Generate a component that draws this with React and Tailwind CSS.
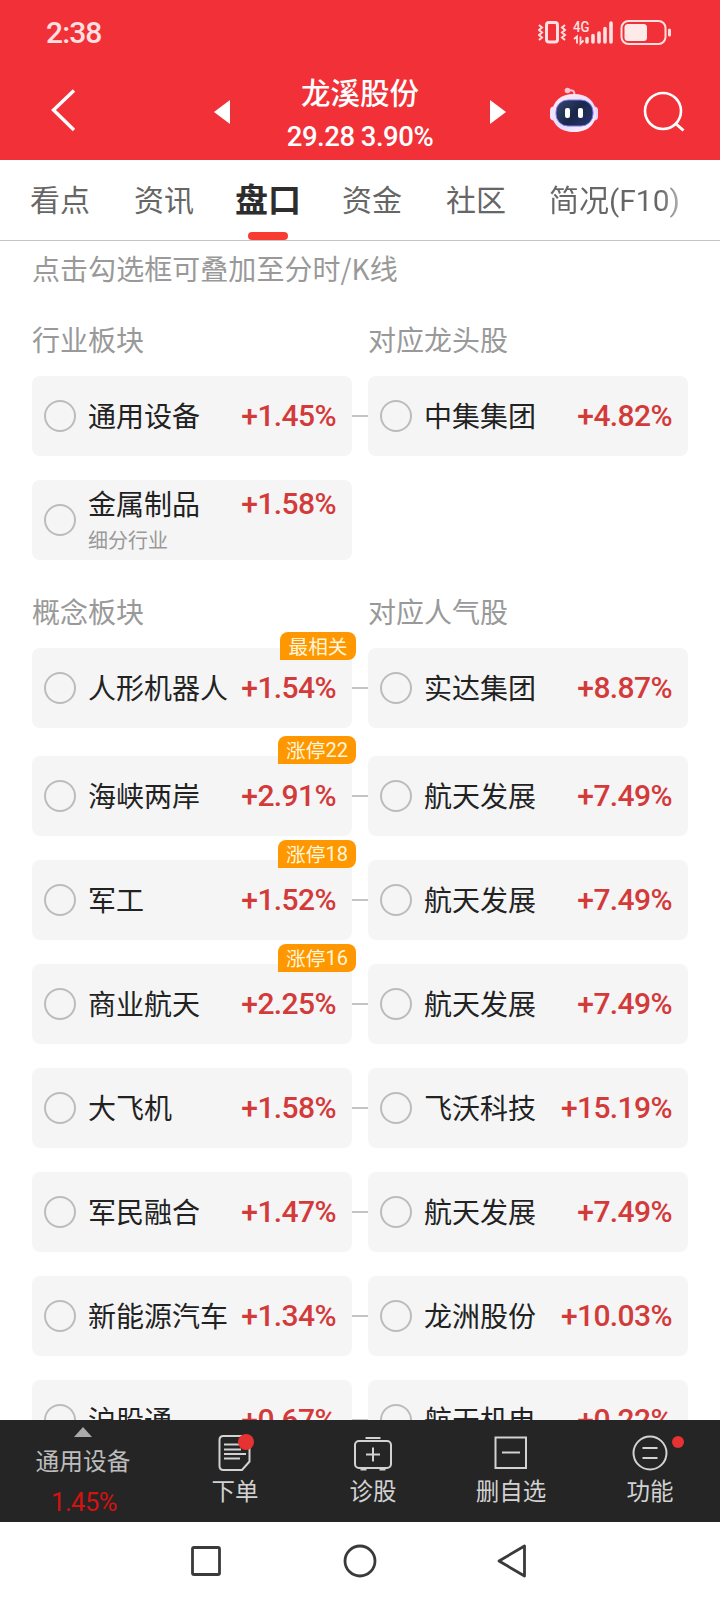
const CJK = "font-['Noto_Sans_CJK_SC',sans-serif]";
const NUM = "font-['Roboto','Noto_Sans_CJK_SC',sans-serif]";

const industries = [
  { left: ['通用设备', '+1.45%'], right: ['中集集团', '+4.82%'], gap: '' },
  { left: ['金属制品', '+1.58%'], sub: '细分行业', gap: 'mt-6' },
];

const concepts = [
  { left: ['人形机器人', '+1.54%'], right: ['实达集团', '+8.87%'], badge: '最相关', badgePos: '-top-4 w-[76px]', gap: '' },
  { left: ['海峡两岸', '+2.91%'], right: ['航天发展', '+7.49%'], badge: '涨停', count: 22, badgePos: '-top-5 w-[78px]', gap: 'mt-7' },
  { left: ['军工', '+1.52%'], right: ['航天发展', '+7.49%'], badge: '涨停', count: 18, badgePos: '-top-5 w-[78px]', gap: 'mt-6' },
  { left: ['商业航天', '+2.25%'], right: ['航天发展', '+7.49%'], badge: '涨停', count: 16, badgePos: '-top-5 w-[78px]', gap: 'mt-6' },
  { left: ['大飞机', '+1.58%'], right: ['飞沃科技', '+15.19%'], gap: 'mt-6' },
  { left: ['军民融合', '+1.47%'], right: ['航天发展', '+7.49%'], gap: 'mt-6' },
  { left: ['新能源汽车', '+1.34%'], right: ['龙洲股份', '+10.03%'], gap: 'mt-6' },
  { left: ['沪股通', '+0.67%'], right: ['航天机电', '+0.22%'], gap: 'mt-6' },
];

function StatusBar() {
  return (
    <div className="flex h-16 items-center pt-0.5 pl-[46px] pr-[48px] text-[#ffe0e0]">
      <span className={`${NUM} text-[30px] leading-8 font-medium tracking-[-0.9px]`}>2:38</span>
      <svg className="ml-auto" width="134" height="26" viewBox="0 0 134 26" fill="none" stroke="currentColor">
        <rect x="8.500" y="2.500" width="11" height="19.500" rx="2.500" strokeWidth="3" />
        <path d="M1 5l3 2.500-3 2.500 3 2.500-3 2.500 3 2.500-3 2.500M27 5l-3 2.500 3 2.500-3 2.500 3 2.500-3 2.500 3 2.500" strokeWidth="2" />
        <text x="35" y="12" fontSize="14.500" fontWeight="500" fontFamily="Roboto" textLength="16.500" lengthAdjust="spacingAndGlyphs" fill="currentColor" stroke="none">4G</text>
        <path d="M36 19l3-2.500v7M42.500 16.500v7l3-3" strokeWidth="1.800" />
        <path d="M49 18.500v3.500M55 15.500v6.500M61 13v9M67 8.500v13.500M73 3v19" strokeWidth="3.600" strokeLinecap="round" />
        <rect x="83.500" y="1" width="44" height="23" rx="7" strokeWidth="2" />
        <rect x="86.500" y="4" width="22.500" height="17" rx="3.500" fill="#ffeaea" stroke="none" />
        <path d="M131.500 10v5" strokeWidth="3" strokeLinecap="round" />
      </svg>
    </div>
  );
}

function Robot() {
  return (
    <svg width="48" height="46" viewBox="0 0 48 46" fill="none">
      <defs>
        <linearGradient id="shell" x1="10" y1="6" x2="36" y2="46" gradientUnits="userSpaceOnUse">
          <stop stopColor="#ffe9f4" />
          <stop offset="0.6" stopColor="#e3dcff" />
          <stop offset="1" stopColor="#fff0fa" />
        </linearGradient>
        <linearGradient id="visor" x1="8" y1="14" x2="40" y2="40" gradientUnits="userSpaceOnUse">
          <stop stopColor="#34466c" />
          <stop offset="0.5" stopColor="#1a2749" />
          <stop offset="1" stopColor="#26356b" />
        </linearGradient>
      </defs>
      <path d="M18 3.500c4-1 6.500 0 6.500 4" stroke="#ffc4d2" strokeWidth="2" />
      <circle cx="17.500" cy="3.500" r="2.800" fill="#ffc4d2" />
      <rect x="0" y="19.500" width="10" height="14" rx="4" fill="#f1e4ff" />
      <rect x="38" y="19.500" width="10" height="14" rx="4" fill="#e3d3ff" />
      <path d="M24 7C37 7 45.500 14 46 26 46 38 37 45 24 45S2 38 2 26C2.500 14 11 7 24 7Z" fill="url(#shell)" />
      <rect x="6" y="13" width="37" height="26" rx="12" fill="url(#visor)" stroke="#7f75ea" strokeWidth="1" />
      <rect x="15" y="21" width="5" height="10" rx="2" fill="#fff" />
      <rect x="28" y="21" width="5" height="10" rx="2" fill="#fff" />
    </svg>
  );
}

function Header() {
  return (
    <header className="h-40 bg-[#f23038]">
      <StatusBar />
      <div className="flex h-24 text-white">
        <svg className="mt-6 ml-[50px]" width="26" height="44" viewBox="0 0 26 44" fill="none" stroke="currentColor" strokeWidth="3.400">
          <path d="M24 2.500L3.500 22L24 42" />
        </svg>
        <svg className="mt-9 ml-[138px]" width="16" height="24" viewBox="0 0 16 24" fill="currentColor">
          <path d="M16 0v24L0 12z" />
        </svg>
        <div className="flex w-[260px] flex-col items-center pt-[7px]">
          <h1 className={`${CJK} text-[29.500px] leading-10 font-medium`}>龙溪股份</h1>
          <p className={`${NUM} mt-2 text-[27.500px] leading-9 font-medium tracking-[-0.5px] whitespace-nowrap`}>29.28 3.90%</p>
        </div>
        <svg className="mt-9" width="16" height="24" viewBox="0 0 16 24" fill="currentColor">
          <path d="M0 0v24l16-12z" />
        </svg>
        <div className="mt-[23px] ml-11">
          <Robot />
        </div>
        <svg className="mt-[26px] ml-[45px]" width="42" height="42" viewBox="0 0 42 42" fill="none" stroke="currentColor" strokeWidth="2.600">
          <circle cx="20" cy="21" r="18" />
          <path d="M32 33l8.500 7.500" strokeWidth="3" />
        </svg>
      </div>
    </header>
  );
}

function Tabs() {
  return (
    <nav className={`${CJK} flex h-[81px] items-start border-b border-[#c4c4c4] pt-[17px] pl-[30px] text-[30px] leading-[42px] whitespace-nowrap text-[#666]`}>
      <span className="w-[104px]">看点</span>
      <span className="w-[101px]">资讯</span>
      <span className="flex w-[107px] flex-col">
        <b className="text-[33px] font-bold text-[#2d2d2d]">盘口</b>
        <i className="mt-[13px] ml-[13px] block h-2 w-10 rounded-full bg-[#f83c32]" />
      </span>
      <span className="w-[104px]">资金</span>
      <span className="w-[103px]">社区</span>
      <span className="bg-gradient-to-r from-[#666] from-85% to-[#b5b5b5] bg-clip-text text-transparent">
        简况<span className={NUM}>(F10)</span>
      </span>
    </nav>
  );
}

function Card({ item, sub, badge, count, badgePos }) {
  const [name, pct] = item;
  return (
    <div className="relative flex h-20 w-80 items-center rounded-lg bg-[#f5f5f5] pr-4 pl-3">
      <span className="size-8 shrink-0 rounded-full border-2 border-[#bcbcbc]" />
      <div className="ml-3 flex grow flex-col">
        <div className="flex items-center justify-between whitespace-nowrap">
          <span className={`${CJK} pb-0.5 text-[28px] leading-[34px] text-[#222]`}>{name}</span>
          <span className={`${NUM} text-[30px] leading-9 font-medium tracking-[-0.6px] text-[#d33a3a]`}>{pct}</span>
        </div>
        {sub && <span className={`${CJK} mt-1 text-[20px] leading-7 text-[#999]`}>{sub}</span>}
      </div>
      {badge && (
        <span className={`${CJK} absolute -right-1 flex h-7 items-center justify-center rounded-lg rounded-bl-none bg-[#ff9800] text-[19.700px] leading-7 whitespace-nowrap text-[#fff6dc] ${badgePos}`}>
          {badge}
          {count && <span className={`${NUM} text-[20px] leading-7`}>{count}</span>}
        </span>
      )}
    </div>
  );
}

function Row({ left, right, sub, badge, count, badgePos, gap }) {
  return (
    <div className={`flex items-center ${gap}`}>
      <Card item={left} sub={sub} badge={badge} count={count} badgePos={badgePos} />
      {right && (
        <>
          <span className="h-0.5 w-4 bg-[#c4c4c4]" />
          <Card item={right} />
        </>
      )}
    </div>
  );
}

function Section({ titles, rows, className }) {
  return (
    <section className={className}>
      <div className={`${CJK} mb-[17px] flex h-10 text-[28px] leading-10 text-[#999]`}>
        <h2 className="w-[336px]">{titles[0]}</h2>
        <h2>{titles[1]}</h2>
      </div>
      {rows.map((row, i) => (
        <Row key={i} {...row} />
      ))}
    </section>
  );
}

function Action({ label, className, children }) {
  return (
    <div className={`flex flex-col items-center pt-3 ${className}`}>
      {children}
      <span className={`${CJK} mt-0.5 text-[23.500px] leading-8`}>{label}</span>
    </div>
  );
}

function BottomBar() {
  return (
    <footer className="flex h-[102px] shrink-0 bg-[#252525] text-[#d2d2d2]">
      <div className="flex w-[166px] flex-col items-center pt-[7px] text-[#bdbdbd]">
        <svg width="18" height="10" viewBox="0 0 18 10" fill="#aaa">
          <path d="M9 0l9 10H0z" />
        </svg>
        <span className={`${CJK} mt-[7px] text-[23.700px] leading-8`}>通用设备</span>
        <span className={`${NUM} mt-2.5 ml-0.5 text-[25.500px] leading-8 tracking-[-0.5px] text-[#d31212]`}>1.45%</span>
      </div>
      <Action label="下单" className="w-[138px]">
        <svg width="40" height="40" viewBox="0 0 40 40" fill="none" stroke="currentColor" strokeWidth="2">
          <path d="M8.500 4h22q4 0 4 4v21.500L27 38H8.500q-4 0-4-4V8q0-4 4-4z" />
          <path d="M9 12.500h16M9 17.500h17M9 22h22M9 26.500h16" />
          <circle cx="31" cy="10" r="8" fill="#e63232" stroke="none" />
        </svg>
      </Action>
      <Action label="诊股" className="w-[138px]">
        <svg width="40" height="40" viewBox="0 0 40 40" fill="none" stroke="currentColor" strokeWidth="2">
          <rect x="2" y="9" width="36" height="27" rx="4" />
          <path d="M12.500 6h15M13 22.500h14M20 15.500v14M7.500 37.500h6M26.500 37.500h6" />
        </svg>
      </Action>
      <Action label="删自选" className="w-[138px]">
        <svg width="40" height="40" viewBox="0 0 40 40" fill="none" stroke="currentColor" strokeWidth="2">
          <rect x="4.500" y="5.500" width="30.500" height="30.500" />
          <path d="M11 20.500h18" />
        </svg>
      </Action>
      <Action label="功能" className="w-[140px]">
        <svg className="overflow-visible" width="40" height="40" viewBox="0 0 40 40" fill="none" stroke="currentColor" strokeWidth="2">
          <circle cx="20" cy="21" r="16.500" />
          <path d="M12.500 16h15M12.500 26h15" />
          <circle cx="48" cy="10" r="6" fill="#e63232" stroke="none" />
        </svg>
      </Action>
    </footer>
  );
}

function SystemNav() {
  return (
    <div className="flex h-[78px] shrink-0 items-center bg-white pl-[190px] text-[#3a3a3a]">
      <svg width="32" height="34" viewBox="0 0 32 34" fill="none" stroke="currentColor" strokeWidth="2.800">
        <rect x="2.500" y="3.500" width="27" height="27" rx="1.500" />
      </svg>
      <svg className="ml-[121px]" width="34" height="34" viewBox="0 0 34 34" fill="none" stroke="currentColor" strokeWidth="2.800">
        <circle cx="17" cy="17" r="15" />
      </svg>
      <svg className="ml-[120px]" width="30" height="34" viewBox="0 0 30 34" fill="none" stroke="currentColor" strokeWidth="2.800" strokeLinejoin="round">
        <path d="M27.500 2v30L2 17z" />
      </svg>
    </div>
  );
}

export default function App() {
  return (
    <div className="flex h-[1600px] w-[720px] flex-col overflow-hidden bg-white">
      <Header />
      <Tabs />
      <main className="h-[1179px] shrink-0 overflow-hidden px-8 pt-[7px]">
        <p className={`${CJK} text-[28px] leading-10 tracking-[0.05px] text-[#999]`}>点击勾选框可叠加至分时/K线</p>
        <Section className="mt-[31px]" titles={['行业板块', '对应龙头股']} rows={industries} />
        <Section className="mt-[31px]" titles={['概念板块', '对应人气股']} rows={concepts} />
      </main>
      <BottomBar />
      <SystemNav />
    </div>
  );
}
